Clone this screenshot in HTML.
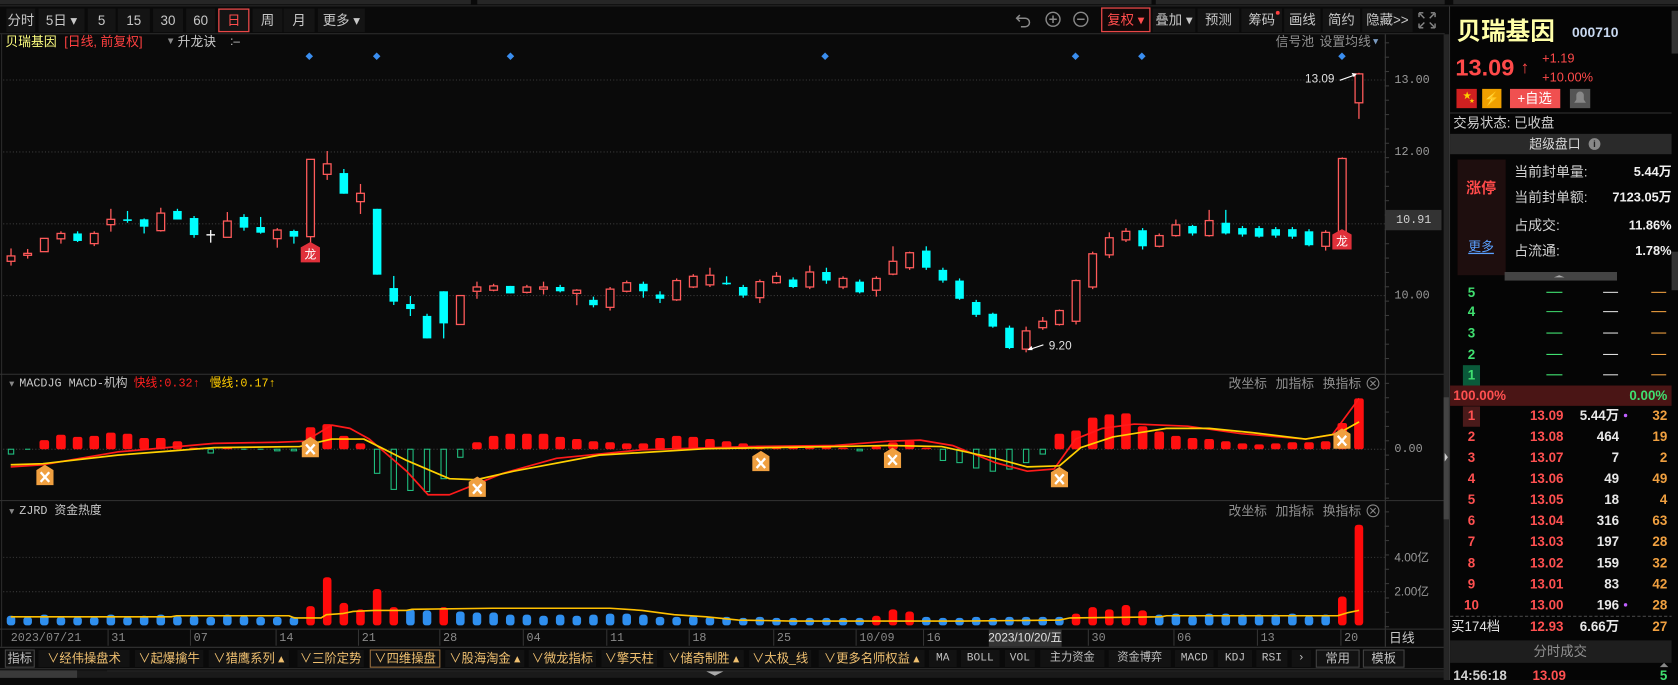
<!DOCTYPE html>
<html><head><meta charset="utf-8">
<style>
html,body{margin:0;padding:0;background:#0a0a0a;width:1678px;height:680px;overflow:hidden}
#s{position:absolute;left:0;top:0;width:1568px;height:635px;transform:scale(1.07015,1.07087);transform-origin:0 0}
svg text{dominant-baseline:central;font-family:"Liberation Sans","Noto Sans CJK SC",sans-serif}
.m{font-family:"Liberation Mono","Noto Sans CJK SC",monospace !important}
</style></head><body>
<div id="s"><svg id="g" width="1568" height="635" xmlns="http://www.w3.org/2000/svg"></svg></div>
<script>
const S=[];
function R(x,y,w,h,f,e){S.push(`<rect x="${x}" y="${y}" width="${w}" height="${h}" fill="${f}" ${e||''}/>`)}
function T(x,y,s,c,fs,a,e){S.push(`<text x="${x}" y="${y}" fill="${c}" font-size="${fs||12}" text-anchor="${a||'start'}" ${e||''}>${s}</text>`)}
function L(x1,y1,x2,y2,c,e){S.push(`<line x1="${x1}" y1="${y1}" x2="${x2}" y2="${y2}" stroke="${c}" ${e||''}/>`)}
function P(pts,c,w){S.push(`<polyline points="${pts.map(p=>p.join(',')).join(' ')}" fill="none" stroke="${c}" stroke-width="${w}" stroke-linejoin="round"/>`)}
R(0,0,1568,635,'#0a0a0a');
// top strip
R(0,0,440,4,'#262626');R(446,0,630,4,'#262626');R(1080,0,270,4,'#262626');R(1358,0,210,4,'#262626');
L(0,5.5,1568,5.5,'#2c2c2c');
// toolbar
const btn=[[6,33,'分时'],[36,79,'5日 ▾'],[82,108,'5'],[110,140,'15'],[143,171,'30'],[174,201,'60'],[204,233,'日'],[236,264,'周'],[265,294,'月'],[297,341,'更多 ▾']];
btn.forEach(b=>{R(b[0],8,b[1]-b[0],22,'#141414');T((b[0]+b[1])/2,19,b[2],b[2]=='日'?'#ff4d4d':'#c8c8c8',12.5,'middle')});
R(204.5,8.5,28,21,'none','stroke="#e84848" stroke-width="1.2"');
// right toolbar
S.push('<path d="M953 14 l-3 3 l3 3 M950 17 h8 a4 4 0 0 1 0 8 h-4" fill="none" stroke="#888" stroke-width="1.4"/>');
S.push('<circle cx="984" cy="18" r="6.5" fill="none" stroke="#888" stroke-width="1.3"/><path d="M980.5 18h7M984 14.5v7" stroke="#888" stroke-width="1.4"/>');
S.push('<circle cx="1010" cy="18" r="6.5" fill="none" stroke="#888" stroke-width="1.3"/><path d="M1006.5 18h7" stroke="#888" stroke-width="1.4"/>');
R(1029.5,7.5,45,22,'#120808','stroke="#e84848" stroke-width="1.2"');T(1052,18.5,'复权 ▾','#ff4d4d',12.5,'middle');
[[1077,1117,'叠加 ▾'],[1119,1158,'预测'],[1160,1198,'筹码'],[1200,1234,'画线'],[1236,1271,'简约'],[1273,1320,'隐藏>>']].forEach(b=>{R(b[0],8,b[1]-b[0],22,'#141414');T((b[0]+b[1])/2,18.5,b[2],'#c8c8c8',12.5,'middle')});
S.push('<circle cx="1194" cy="12" r="1.8" fill="#ff4040"/>');
S.push('<path d="M1326 12h4v0M1326 12v4M1341 12h-4M1341 12v4M1326 26h4M1326 26v-4M1341 26h-4M1341 26v-4M1327 13l4 4M1340 13l-4 4M1327 25l4-4M1340 25l-4-4" stroke="#888" stroke-width="1.3" fill="none"/>');
L(0,31.5,1350,31.5,'#2e2e2e');
// title
T(5,39,'贝瑞基因','#ffff80',12);T(60,39,'[日线, 前复权]','#ff4040',12);
T(155,39,'▼','#888',9);T(166,39,'升龙诀','#c8c8c8',12);T(215,39,':–','#c8c8c8',11);
T(1192,39,'信号池','#909090',12);T(1233,39,'设置均线','#909090',12);T(1283,39,'▾','#7a9ac0',10);
[289,352,477,771,1005,1067,1254].forEach(x=>S.push(`<path d="M${x} 49l3.5 3.5l-3.5 3.5l-3.5-3.5z" fill="#3a8ef0"/>`));
// axis
L(1294.5,32,1294.5,604,'#3a3a3a');L(1.5,32,1.5,604,'#2a2a2a');
for(let y=40;y<348;y+=13.4)L(1294,y,1298,y,'#3a3a3a');
for(let y=358;y<466;y+=13.4)L(1294,y,1298,y,'#3a3a3a');
for(let y=478;y<586;y+=13.4)L(1294,y,1298,y,'#3a3a3a');
const DOT='stroke-dasharray="1,2"';
[[74.7,'13.00'],[141.9,'12.00'],[209,''],[276,'10.00']].forEach(a=>{L(3,a[0],1294,a[0],'#3a3a3a',DOT);if(a[1])T(1303,a[0],a[1],'#9a9a9a',11,'start','class="m"')});
R(1295,196,52,19,'#333');T(1321,205.5,'10.91','#d0d0d0',11,'middle','class="m"');
// candles
const C=[['r',239,244,232,248],['r',236.6,238.4,232.5,241.5],['r',222.6,235],['r',218,223,216,227.5],['c',218,225,216,226],['r',218,227.5,216,229.8],['r',204.8,209.8,195,216.3],['c',204.8,205.6,197,208],['c',204.8,211.7,204,218],['r',199,215.4,194,216.3],['c',197,205,195,205],['c',203.6,219.5,201.7,222],['w',219.3,220,214.8,226.6],['r',206.4,221.6,198,221.6],['c',202.6,212.6,200,215.4],['c',212,217.3,202.6,218.2],['r',214.8,222.9,213,231.3],['c',215.7,221,214.5,227.5],['r',148.8,221,148.8,227.2],['r',153,162.8,141,168],['c',161.6,180.9,157.8,180.9],['r',180.5,188.3,171.8,199.8],['c',195,256.5],['c',269,281.7,257.7,284.8],['c',283.9,288.6,276.4,295.1],['c',295,316,293,316],['c',272,302,272,316],['r',276,303],['r',268,272,263,279],['r',267,271,265,272],['c',267,274],['r',268,273,266,274],['r',268,270,263,275],['c',268,272,266,273],['r',271,274,270,285],['c',280,285,277,287],['r',270,287,268,290],['r',264,272,262,273],['c',265,272,263,278],['c',275,279,272,283],['r',262,280,260,281],['r',258,268,256,269],['r',257,266,250,268],['c',264,265.5,258,266],['c',268,276,266,278],['r',263,278,261,283],['r',258,264,254,265],['c',261,268,259,269],['r',254,268,248,270],['c',254,262,250,265],['r',260,268,258,270],['c',263,273,261,274],['r',260,271,258,277],['r',244,256,230,257],['r',236,250,235,252],['c',234,250,230,252],['c',252,262,250,264],['c',262,279,260,280],['c',282,294,280,296],['c',293,305,292,306],['c',306,325,304,326],['r',309,326,305,329],['r',300,306,296,308],['r',290,303,289,304],['r',262,300,261,303],['r',237,268,235,270],['r',222,238,217,241],['r',216,224,213,226],['c',215,230,213,233],['r',220,230,218,231],['r',210,220,205,221],['c',211,218,210,220],['r',206,220,196,221],['c',208,218,196,219],['c',213,219,211,221],['c',213,221,211,222],['c',214,220,212,222],['c',214,221,212,223],['c',216,229,214,230],['r',217,230,215,234],['r',148,217,147,217],['r',69,96,68,111]];
const X=i=>10.3+i*15.55;
C.forEach((c,i)=>{const x=X(i);const col=c[0]=='r'?'#ff5a5a':c[0]=='c'?'#00ffff':'#ffffff';
const h=c[3]??c[1],l=c[4]??c[2];L(x,h,x,l,col,'stroke-width="1.2"');
if(c[0]=='r')R(x-3.6,c[1],7.2,Math.max(c[2]-c[1],1.5),'#0a0a0a','stroke="#ff5a5a" stroke-width="1.2"');
else if(c[0]=='c')R(x-4,c[1],8,Math.max(c[2]-c[1],1.5),'#00ffff');
else L(x-4,c[1],x+4,c[1],'#fff','stroke-width="1.3"');});
function dragon(x,y){S.push(`<path d="M${x-9} ${y+3}l9-5l9 5v14h-18z" fill="#e0303a"/>`);T(x,y+10,'龙','#fff',11,'middle');}
dragon(290,228);dragon(1254,216);
L(1252,75,1266,70,'#fff');S.push('<path d="M1268 69l-5 -1l2 4z" fill="#fff"/>');T(1247,74,'13.09','#e0e0e0',11,'end');
L(975,322,963,326,'#fff');S.push('<path d="M960 327l4-4l1 4z" fill="#fff"/>');T(980,323,'9.20','#e0e0e0',11,'start');
// panel separators
L(0,349.5,1350,349.5,'#333');L(0,467.5,1350,467.5,'#333');
// MACD header
function hdr(y,a){T(7,y,'▼','#888',8);S.push(a);T(1148,y,'改坐标','#909090',12);T(1192,y,'加指标','#909090',12);T(1236,y,'换指标','#909090',12);
S.push(`<circle cx="1283" cy="${y}" r="5.5" fill="none" stroke="#888"/><path d="M1280.5 ${y-2.5}l5 5M1285.5 ${y-2.5}l-5 5" stroke="#888"/>`);}
hdr(358,`<text x="18" y="358" fill="#c8c8c8" font-size="11" class="m">MACDJG MACD-机构</text><text x="125" y="358" fill="#ff2020" font-size="11" class="m">快线:0.32↑</text><text x="196" y="358" fill="#ffcc00" font-size="11" class="m">慢线:0.17↑</text>`);
hdr(477,`<text x="18" y="477" fill="#c8c8c8" font-size="11" class="m">ZJRD 资金热度</text>`);
L(3,419.5,1294,419.5,'#444',DOT);T(1303,419.5,'0.00','#9a9a9a',11,'start','class="m"');
const M=[424,420,411,406,408,407,404,405,409,409,412,418,423,418,419,419,421,421,399,396,407,414,442,457,458,459,447,427,413,407,405,405,405,408,410,412,413,414,414,409,407,408,410,412,414,416,417,418,418,417,418,421,417,413,411,418,430,432,437,440,438,432,424,405,402,390,387,386,398,403,407,409,410,412,414,415,414,413,413,412,395,372];
M.forEach((v,i)=>{const x=X(i);if(v<419)R(x-4.5,v,9,419.5-v,'#ff1010','rx="2"');else if(v>420)R(x-2.5,419.5,5,v-419.5,'none','stroke="#20c080" stroke-width="1"');else L(x-2.5,419.5,x+2.5,419.5,'#20c080');});
P([[10,436],[40,434],[110,422],[200,414],[260,413],[285,412],[310,397],[327,400],[345,410],[380,440],[400,462],[420,462],[445,452],[470,442],[520,428],[600,420],[700,417],[780,416],[830,412],[860,411],[890,416],[930,432],[960,440],[985,438],[1005,410],[1030,400],[1060,396],[1110,398],[1160,405],[1220,410],[1245,406],[1270,372]],'#ff1a1a',1.6);
P([[10,434],[40,433],[110,425],[200,418],[280,417],[310,410],[340,410],[380,430],[420,447],[445,448],[480,440],[560,425],[660,419],[780,417],[830,416],[880,417],[930,428],[960,436],[990,435],[1010,418],[1040,408],[1090,400],[1130,400],[1170,404],[1220,410],[1250,405],[1270,394]],'#ffd000',1.6);
function xm(x,y){S.push(`<path d="M${x-8} ${y-5}l8-5l8 5v14h-16z" fill="#f0a040"/><path d="M${x-4} ${y-3}l8 9M${x+4} ${y-3}l-8 9" stroke="#fff" stroke-width="2.2"/>`);}
[[42,444],[290,418],[446,455],[711,431],[834,428],[990,446],[1254,410]].forEach(p=>xm(p[0],p[1]));
// ZJRD
L(3,520.5,1294,520.5,'#3a3a3a',DOT);L(3,552.5,1294,552.5,'#3a3a3a',DOT);
T(1303,521,'4.00亿','#9a9a9a',11);T(1303,553,'2.00亿','#9a9a9a',11);
const red={18:566,19:539,20:563,21:569,22:550,23:567,26:567,52:575,53:569,54:571,64:573,65:567,66:569,67:565,68:570,80:557,81:490};
const bl=[575,576,574,576,576,576,574,576,575,574,575,575,576,574,575,576,576,576,0,0,0,0,0,0,569,570,0,571,572,572,574,574,575,574,575,574,573,573,574,576,576,575,576,576,577,576,577,577,577,577,577,577,0,0,0,576,577,577,576,577,576,576,576,576,0,0,0,0,0,574,573,575,573,573,574,574,574,573,575,574,0,0];
for(let i=0;i<82;i++){const x=X(i);if(red[i])R(x-4,red[i],8,584-red[i],'#ff0a0a','rx="3"');else R(x-4,bl[i],8,584-bl[i],'#2f8fef','rx="3"');}
P([[10,576],[160,576],[165,575],[270,575],[275,577],[300,577],[305,574],[320,573],[330,571],[350,570],[380,570],[385,569],[460,568],[570,568],[600,570],[630,574],[660,576],[690,579],[740,580],[900,580],[990,579],[1000,577],[1085,576],[1090,575],[1250,575],[1260,572],[1270,570]],'#ffc000',1.5);
// date axis
L(0,587.5,1350,587.5,'#333');
[[10,'2023/07/21'],[104,'31'],[181,'07'],[261,'14'],[338,'21'],[414,'28'],[492,'04'],[570,'11'],[647,'18'],[726,'25'],[803,'10/09'],[866,'16'],[1020,'30'],[1100,'06'],[1178,'13'],[1256,'20']].forEach(d=>{if(d[0]>20)L(d[0]-3,588,d[0]-3,603,'#333');T(d[0],596,d[1],'#8a8a8a',11,'start','class="m"')});
R(924,588,68,16,'#333');T(958,596,'2023/10/20/五','#e0e0e0',11,'middle');
T(1298,596,'日线','#c8c8c8',12);
L(0,604.5,1350,604.5,'#333');
// tabs
const tabs=[[5,32,'指标',1],[36,121,'∨经伟操盘术'],[126,190,'∨起爆擒牛'],[195,270,'∨猎鹰系列 ▴'],[278,340,'∨三阶定势'],[346,411,'∨四维操盘',2],[416,490,'∨股海淘金 ▴'],[494,557,'∨微龙指标'],[562,614,'∨擎天柱'],[620,695,'∨储奇制胜 ▴'],[700,758,'∨太极_线'],[765,864,'∨更多名师权益 ▴'],[868,894,'MA',3],[898,934,'BOLL',3],[939,967,'VOL',3],[972,1032,'主力资金',3],[1036,1094,'资金博弈',3],[1098,1134,'MACD',3],[1138,1170,'KDJ',3],[1174,1203,'RSI',3],[1207,1225,'›',3],[1230,1270,'常用',1],[1274,1312,'模板',1]];
tabs.forEach(t=>{R(t[0],607,t[1]-t[0],16,'#121212',t[3]==1?'stroke="#444"':t[3]==2?'stroke="#9a7040"':'');
T((t[0]+t[1])/2,615,t[2],t[3]==1||t[3]==3?'#c0c0c0':'#f0c070',t[3]==3&&t[2].length<5?10.5:11.5,'middle',t[3]==3?'class="m"':'');});
L(0,624.5,1350,624.5,'#333');R(0,626,1350,7,'#1a1a1a');R(0,626,72,7,'#3a3a3a');R(100,626,1250,1,'#262626');
S.push('<path d="M660 627h16l-8 4z" fill="#aaa"/>');
// divider
R(1349,32,5,603,'#262626');R(1349,371,5,114,'#444');S.push('<path d="M1350 423l3 4l-3 4z" fill="#ccc"/>');
// right panel
R(1354,6,214,629,'#050505');L(1354.5,6,1354.5,635,'#333');R(1562,10,6,40,'#333');R(1562,235,6,36,'#333');
T(1361,30,'贝瑞基因','#ffffa8',23,'start','font-weight="bold"');T(1469,30,'000710','#c8d8f0',13,'start','font-weight="bold"');
T(1360,63,'13.09','#ff4a4a',22,'start','font-weight="bold"');T(1421,63,'↑','#ff4a4a',16,'start','font-weight="bold"');
T(1441,54,'+1.19','#ff4a4a',12);T(1441,72,'+10.00%','#ff4a4a',12);
R(1361,83,19,18,'#d02020');T(1367,89,'★','#ffd000',8);T(1373,95,'★','#ffd000',5);
R(1385,83,18,18,'#f0a000');T(1394,92,'⚡','#fff',12,'middle');
R(1411,83,47,18,'#f05050');T(1434,92,'+自选','#fff',12.5,'middle');
R(1467,83,19,18,'#555');S.push('<path d="M1471 96h11l-2-3v-4a3.5 3.5 0 0 0-7 0v4z" fill="#888"/>');
L(1355,105.5,1562,105.5,'#333');
T(1358,115,'交易状态: 已收盘','#d0d0d0',12.5);
R(1355,125,207,19,'#2a2a2a');T(1453,134.5,'超级盘口','#d8d8d8',12,'middle');S.push('<circle cx="1490" cy="134.5" r="5.5" fill="#888"/>');T(1490,135,'i','#222',9,'middle','font-weight="bold"');
R(1362,149,45,108,'#1e0e0e');T(1384,176,'涨停','#ff4a4a',14,'middle','font-weight="bold"');
T(1384,230,'更多','#5aa0ff',12,'middle','text-decoration="underline"');
[[160,'当前封单量:','5.44万'],[184,'当前封单额:','7123.05万'],[210,'占成交:','11.86%'],[234,'占流通:','1.78%']].forEach(r=>{T(1415,r[0],r[1],'#d0d0d0',13);T(1562,r[0],r[2],'#f0f0f0',12,'end','font-weight="bold"')});
R(1406,254,105,8,'#444');S.push('<path d="M1452 259h10l-5-2z" fill="#aaa"/>');
[[273,'5'],[291,'4'],[311,'3'],[331,'2'],[350,'1']].forEach((r,k)=>{if(k==4)R(1367,341,16,19,'#0a5a3a');T(1375,r[0],r[1],'#40e070',12.5,'middle','font-weight="bold"');
L(1445,r[0],1460,r[0],'#40e070');L(1498,r[0],1512,r[0],'#ddd');L(1543,r[0],1557,r[0],'#f0a040');});
R(1355,360,207,19,'#4a1515');T(1358,369.5,'100.00%','#ff5050',12.5,'start','font-weight="bold"');T(1558,369.5,'0.00%','#40e070',12.5,'end','font-weight="bold"');
const bids=[['13.09','5.44万','32',1],['13.08','464','19'],['13.07','7','2'],['13.06','49','49'],['13.05','18','4'],['13.04','316','63'],['13.03','197','28'],['13.02','159','32'],['13.01','83','42'],['13.00','196','28',1]];
bids.forEach((b,k)=>{const y=388+k*19.65;if(k==0)R(1367,379.5,16,19,'#4a1a1a');
T(1375,y,String(k+1),'#ff5050',12.5,'middle','font-weight="bold"');T(1461,y,b[0],'#ff5050',12.5,'end','font-weight="bold"');
T(1513,y,b[1],'#e8e8e8',12.5,'end','font-weight="bold"');if(b[3])S.push(`<circle cx="1519" cy="${y}" r="1.6" fill="#c060ff"/>`);T(1558,y,b[2],'#f0a040',12.5,'end','font-weight="bold"');});
L(1355,575.5,1562,575.5,'#444','stroke-dasharray="3,2"');
T(1356,585,'买174档','#e0e0e0',12.5);T(1461,585,'12.93','#ff5050',12.5,'end','font-weight="bold"');T(1513,585,'6.66万','#e8e8e8',12.5,'end','font-weight="bold"');T(1558,585,'27','#f0a040',12.5,'end','font-weight="bold"');
R(1355,598,207,21,'#1e1e1e');T(1458,608.5,'分时成交','#909090',12.5,'middle');
S.push('<path d="M1551 623l4-4l4 4z" fill="#888"/>');
T(1358,631,'14:56:18','#d0d0d0',12.5,'start','font-weight="bold"');T(1432,631,'13.09','#ff5050',12.5,'start','font-weight="bold"');T(1558,631,'5','#40e070',12.5,'end','font-weight="bold"');
document.getElementById('g').innerHTML=S.join('');
</script>
</body></html>
